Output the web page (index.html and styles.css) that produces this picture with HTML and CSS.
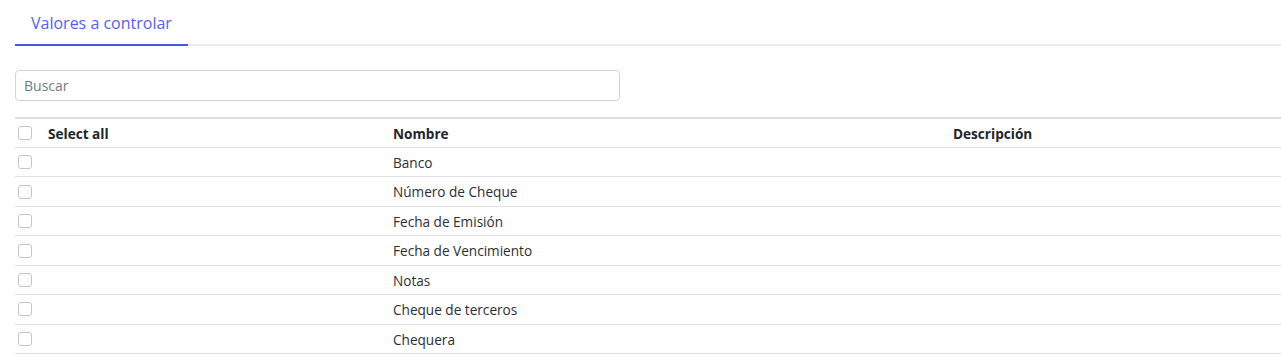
FILE: index.html
```html
<!DOCTYPE html>
<html lang="es">
<head>
<meta charset="utf-8">
<title>Valores a controlar</title>
<link rel="stylesheet" href="styles.css">
</head>
<body>
<div class="page">
  <nav class="tabs">
    <a class="tab active">Valores a controlar</a>
  </nav>
  <div class="search-wrap">
    <input class="search" type="text" placeholder="Buscar">
  </div>
  <table class="grid">
    <colgroup>
      <col class="c-check">
      <col class="c-sel">
      <col class="c-name">
      <col class="c-desc">
    </colgroup>
    <thead>
      <tr>
        <th class="chk"><span class="box"></span></th>
        <th>Select all</th>
        <th>Nombre</th>
        <th>Descripción</th>
      </tr>
    </thead>
    <tbody>
      <tr><td class="chk"><span class="box"></span></td><td></td><td>Banco</td><td></td></tr>
      <tr><td class="chk"><span class="box"></span></td><td></td><td>Número de Cheque</td><td></td></tr>
      <tr><td class="chk"><span class="box"></span></td><td></td><td>Fecha de Emisión</td><td></td></tr>
      <tr><td class="chk"><span class="box"></span></td><td></td><td>Fecha de Vencimiento</td><td></td></tr>
      <tr><td class="chk"><span class="box"></span></td><td></td><td>Notas</td><td></td></tr>
      <tr><td class="chk"><span class="box"></span></td><td></td><td>Cheque de terceros</td><td></td></tr>
      <tr><td class="chk"><span class="box"></span></td><td></td><td>Chequera</td><td></td></tr>
    </tbody>
  </table>
</div>
</body>
</html>
```

FILE: styles.css
```css
* { box-sizing: border-box; }
html, body { margin: 0; padding: 0; background: #fff; }
body {
  font-family: "Open Sans", "Noto Sans", sans-serif;
  font-size: 14px;
  color: #212529;
}
.page { padding-left: 15px; }

.tabs {
  display: flex;
  border-bottom: 2px solid #e9ecf3;
}
.tab {
  display: block;
  padding: 11px 16px 9px;
  line-height: 24px;
  font-size: 16px;
  color: #5561f0;
  margin-bottom: -2px;
  border-bottom: 2px solid transparent;
}
.tab.active { border-bottom-color: #4355f0; }

.search-wrap { margin-top: 24px; }
.search {
  display: block;
  width: 605px;
  height: 31px;
  padding: 0 8px;
  border: 1px solid #d0d4da;
  border-radius: 4px;
  font-family: inherit;
  font-size: 14px;
  color: #212529;
  outline: none;
}
.search::placeholder { color: #727a82; }

.grid {
  margin-top: 16px;
  width: 100%;
  border-collapse: collapse;
  table-layout: fixed;
  border-top: 2px solid #dee2e6;
  font-size: 13.6px;
}
.c-check { width: 25px; }
.c-sel { width: 345px; }
.c-name { width: 560px; }
.grid th, .grid td {
  text-align: left;
  padding: 5px 8px 3px;
  border-bottom: 1px solid #dee2e6;
  vertical-align: middle;
  white-space: nowrap;
}
.grid th { font-weight: 700; line-height: 20px; }
.grid td { line-height: 20.43px; color: #2b2f33; }
.grid .chk { padding: 4px 0 4px 3px; }
.box {
  display: block;
  width: 14px;
  height: 14px;
  border: 1px solid #c4c6c9;
  border-radius: 3px;
  background: #fff;
}
```
